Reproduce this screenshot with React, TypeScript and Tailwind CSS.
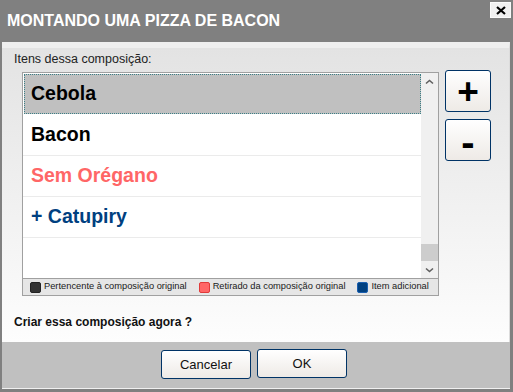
const rows = [
  { label: "Cebola", color: "text-black", selected: true },
  { label: "Bacon", color: "text-black", selected: false },
  { label: "Sem Orégano", color: "text-[#ff6666]", selected: false },
  { label: "+ Catupiry", color: "text-[#004080]", selected: false },
];

const legend = [
  { label: "Pertencente à composição original", box: "bg-[#333333] border-[#222222]" },
  { label: "Retirado da composição original", box: "bg-[#ff6666] border-[#e03a3a]" },
  { label: "Item adicional", box: "bg-[#004080] border-[#1a5fb0]" },
];

function Chevron({ down }: { down?: boolean }) {
  return (
    <svg width="9" height="6" viewBox="0 0 9 6">
      <path
        d={down ? "M1 1.5 L4.5 4.5 L8 1.5" : "M1 4.5 L4.5 1.5 L8 4.5"}
        fill="none"
        stroke="#606060"
        strokeWidth="1.6"
      />
    </svg>
  );
}

export default function App() {
  return (
    <div className="w-[513px] h-[392px] overflow-hidden bg-[#808080] flex flex-col font-['Liberation_Sans',Arial,sans-serif]">
      {/* Title bar */}
      <div className="h-[42px] shrink-0 flex items-start justify-between pl-[7px] pr-[2px]">
        <h1 className="self-center text-[16px] font-bold text-white leading-none">
          MONTANDO UMA PIZZA DE BACON
        </h1>
        <button className="mt-[2px] w-[21px] h-[16px] bg-[#f0f0f0] border border-[#fafafa] flex items-center justify-center">
          <svg width="10" height="9" viewBox="0 0 10 9">
            <path d="M1 1 L9 8 M9 1 L1 8" stroke="#000" strokeWidth="2.2" />
          </svg>
        </button>
      </div>

      {/* Body */}
      <div className="ml-[2px] mr-[3px] h-[300px] shrink-0 flex flex-col bg-gradient-to-b from-[#e3e3e3] to-[#fdfdfd] border-t-[6px] border-t-[#efefef] border-r border-r-[#dcdcdc] pl-[12px] pt-[4px]">
        <p className="text-[12.5px] leading-[14px] h-[14px] text-[#222]">Itens dessa composição:</p>

        <div className="mt-[4px] pl-[8px] flex items-start">
          {/* Listbox */}
          <div className="mt-[2px] w-[417px] h-[224px] border border-[#a0a0a0] bg-white flex flex-col">
            <div className="flex h-[205px]">
              <div className="flex-1 flex flex-col">
                {rows.map((r) =>
                  r.selected ? (
                    <div
                      key={r.label}
                      className="ml-[1px] my-[1px] h-[40px] bg-[#c0c0c0] border border-dotted border-[#3c7f86] flex items-center pl-[6px]"
                    >
                      <span className={`text-[19.5px] font-bold ${r.color}`}>{r.label}</span>
                    </div>
                  ) : (
                    <div
                      key={r.label}
                      className="h-[41px] border-b border-[#ebebeb] flex items-center pl-[8px]"
                    >
                      <span className={`text-[19.5px] font-bold ${r.color}`}>{r.label}</span>
                    </div>
                  )
                )}
              </div>
              {/* Scrollbar */}
              <div className="w-[17px] bg-[#f0f0f0] flex flex-col">
                <div className="h-[17px] flex items-center justify-center">
                  <Chevron />
                </div>
                <div className="flex-1 flex flex-col justify-end">
                  <div className="h-[17px] bg-[#cdcdcd]" />
                </div>
                <div className="h-[17px] flex items-center justify-center">
                  <Chevron down />
                </div>
              </div>
            </div>
            {/* Legend */}
            <div className="h-[17px] border-t border-[#a0a0a0] bg-[#e6e6e6] flex items-center gap-[12px] pl-[7px] text-[9.3px] text-[#1a1a1a]">
              {legend.map((l) => (
                <span key={l.label} className="flex items-center gap-[3px]">
                  <span className={`w-[11px] h-[11px] rounded-[2px] border ${l.box}`} />
                  {l.label}
                </span>
              ))}
            </div>
          </div>

          {/* + / - buttons */}
          <div className="ml-[6px] flex flex-col gap-[7px]">
            <button className="w-[46px] h-[42px] rounded-[3px] border border-[#003366] bg-gradient-to-b from-[#ffffff] to-[#eeeae6] flex items-center justify-center text-[37px] font-bold leading-none text-black">
              +
            </button>
            <button className="w-[46px] h-[42px] rounded-[3px] border border-[#003366] bg-gradient-to-b from-[#ffffff] to-[#eeeae6] flex items-center justify-center pt-[3px] text-[40px] font-bold leading-none text-black">
              -
            </button>
          </div>
        </div>

        <p className="mt-[19px] text-[12px] leading-[14px] font-bold text-[#111]">
          Criar essa composição agora ?
        </p>
      </div>

      {/* Footer */}
      <div className="ml-[2px] mr-[3px] h-[46px] shrink-0 bg-[#c0c0c0] flex items-start gap-[6px] pt-[7px] pl-[159px]">
        <button className="mt-[1px] w-[90px] h-[29px] rounded-[3px] border border-[#003366] bg-gradient-to-b from-[#ffffff] to-[#eeeae6] text-[13px] text-[#111]">
          Cancelar
        </button>
        <button className="w-[90px] h-[29px] rounded-[3px] border border-[#003366] bg-gradient-to-b from-[#ffffff] to-[#eeeae6] text-[13px] text-[#111]">
          OK
        </button>
      </div>
      <div className="ml-[2px] mr-[3px] h-[1px] shrink-0 bg-[#f0f0f0]" />
    </div>
  );
}
